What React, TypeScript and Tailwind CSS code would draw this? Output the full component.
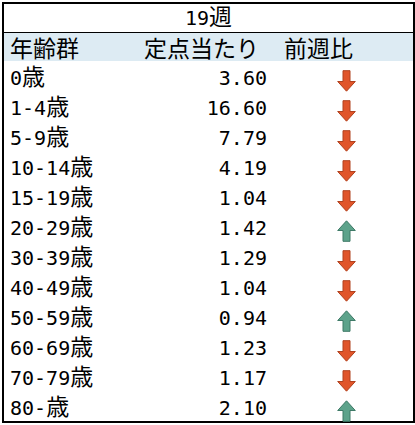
const rows: [string, string, "up" | "down"][] = [
  ["0歳", "3.60", "down"],
  ["1-4歳", "16.60", "down"],
  ["5-9歳", "7.79", "down"],
  ["10-14歳", "4.19", "down"],
  ["15-19歳", "1.04", "down"],
  ["20-29歳", "1.42", "up"],
  ["30-39歳", "1.29", "down"],
  ["40-49歳", "1.04", "down"],
  ["50-59歳", "0.94", "up"],
  ["60-69歳", "1.23", "down"],
  ["70-79歳", "1.17", "down"],
  ["80-歳", "2.10", "up"],
];

const Arrow = ({ dir }: { dir: "up" | "down" }) => {
  const up = dir === "up";
  return (
    <svg width="19" height="22" viewBox="0 0 19 22" className={up ? "" : "rotate-180"}>
      <polygon
        points="9.5,0.8 18.3,10.5 13,10.5 13,21.3 6,21.3 6,10.5 0.7,10.5"
        fill={up ? "#5da38b" : "#e0552a"}
        stroke={up ? "#3e7a67" : "#b0421e"}
        strokeWidth="1"
      />
    </svg>
  );
};

export default function App() {
  return (
    <div className="bg-white w-[415px] h-[425px] pt-[2px] pl-[2px] font-['Noto_Sans_CJK_JP',sans-serif] text-[23px] text-black">
      <div className="w-[413px] h-[421px] border-2 border-black flex flex-col">
        <div className="h-[29px] border-b border-black flex items-end justify-center leading-[27px]">
          <span>
            <span className="font-['DejaVu_Sans_Mono',monospace] text-[20px]">19</span>週
          </span>
        </div>
        <div className="h-[28px] bg-[#ddebf3] grid grid-cols-[136px_132px_1fr] items-end leading-[27px]">
          <div className="pl-[6px]">年齢群</div>
          <div className="pl-[4px]">定点当たり</div>
          <div className="pl-[12px]">前週比</div>
        </div>
        {rows.map(([age, value, dir]) => (
          <div key={age} className="h-[30px] grid grid-cols-[136px_132px_1fr] items-end leading-[29px]">
            <div className="pl-[6px]">
              <span className="font-['DejaVu_Sans_Mono',monospace] text-[20px]">{age.replace("歳", "")}</span>歳
            </div>
            <div className="pr-[5px] text-right font-['DejaVu_Sans_Mono',monospace] text-[20px]">{value}</div>
            <div className="pl-[65px] flex items-end pb-[1px]">
              <Arrow dir={dir} />
            </div>
          </div>
        ))}
      </div>
    </div>
  );
}
